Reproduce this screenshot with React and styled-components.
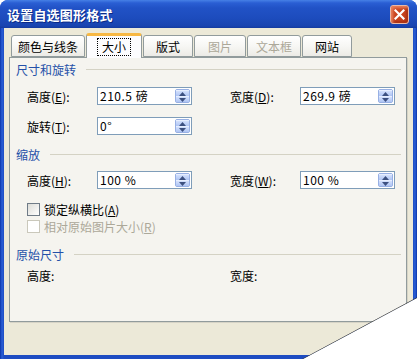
import styled, { createGlobalStyle } from "styled-components";

const GlobalStyle = createGlobalStyle`
  html, body {
    margin: 0;
    padding: 0;
    background: #ffffff;
    overflow: hidden;
  }
  body {
    font-family: "Noto Sans CJK SC", "Noto Sans", sans-serif;
    font-size: 12px;
    color: #000;
  }
`;

const Window = styled.div`
  position: relative;
  width: 417px;
  height: 359px;
  display: flex;
  flex-direction: column;
  background: linear-gradient(90deg, #0b34a8 0px, #2a5fd6 2px, #1d4cc2 4px, #1d4cc2 413px, #2a5fd6 415px, #0b34a8 417px);
  border-radius: 8px 8px 0 0;
  clip-path: polygon(0 0, 100% 0, 100% 298px, 303px 100%, 0 100%);
`;

const TitleBar = styled.div`
  height: 28px;
  flex: none;
  display: flex;
  align-items: center;
  justify-content: space-between;
  padding: 0 7px 0 7px;
  border-radius: 8px 8px 0 0;
  background: linear-gradient(
    180deg,
    #4680e6 0px,
    #2a5ed3 3px,
    #2152c6 8px,
    #1d4cbd 18px,
    #1944b0 26px,
    #143b9f 28px
  );
`;

const Title = styled.span`
  color: #ffffff;
  font-size: 13px;
  font-weight: bold;
  letter-spacing: 0.2px;
  text-shadow: 1px 1px 0 #0b2a86;
`;

const CloseButton = styled.div`
  position: relative;
  z-index: 5;
  flex: none;
  width: 19px;
  height: 19px;
  box-sizing: border-box;
  margin-right: 1px;
  border: 1px solid #e9b9a8;
  border-radius: 3px;
  background-color: #c8431f;
  box-shadow: inset 2px 2px 3px #e9805c, inset -2px -2px 3px #a52e12;
  display: flex;
  align-items: center;
  justify-content: center;
`;

const Frame = styled.div`
  flex: 1;
  display: flex;
  flex-direction: column;
  padding: 0 4px 4px 4px;
`;

const Client = styled.div`
  flex: 1;
  background: #ece9d8;
  padding: 5px 6px 0 5px;
`;

const TabRow = styled.div`
  display: flex;
  align-items: flex-end;
  height: 24px;
  padding-left: 2px;
  gap: 1px;
`;

const Tab = styled.div`
  position: relative;
  z-index: ${(p) => (p.$active ? 2 : 1)};
  width: ${(p) => p.$w}px;
  height: ${(p) => (p.$active ? 25 : 22)}px;
  margin-bottom: ${(p) => (p.$active ? -1 : 0)}px;
  box-sizing: border-box;
  display: flex;
  align-items: ${(p) => (p.$active ? "flex-start" : "center")};
  justify-content: center;
  padding-top: ${(p) => (p.$active ? 4 : 0)}px;
  font-size: 12px;
  color: ${(p) => (p.$disabled ? "#aca899" : "#000")};
  border: 1px solid #919b9c;
  border-bottom: ${(p) => (p.$active ? "none" : "1px solid #919b9c")};
  border-top: ${(p) => (p.$active ? "3px solid #f7b843" : "1px solid #919b9c")};
  border-radius: 3px 3px 0 0;
  background: ${(p) =>
    p.$active
      ? "#fcfcfe"
      : "linear-gradient(180deg, #ffffff 0%, #f7f7f4 50%, #ecebe6 100%)"};
`;

const FocusText = styled.span`
  outline: 1px dotted #000;
  outline-offset: 1px;
  padding: 0 3px;
  line-height: 14px;
`;

const Panel = styled.div`
  height: 265px;
  box-sizing: border-box;
  border: 1px solid #919b9c;
  background: #f5f4ef;
  padding: 3px 5px 0 6px;
  box-shadow: 1px 1px 0 #d6d3c6;
`;

const SectionHeader = styled.div`
  display: flex;
  align-items: center;
  gap: 10px;
  height: 14px;
  color: #2450a8;
  font-size: 12px;
  margin-top: ${(p) => p.$top || 0}px;

  &::after {
    content: "";
    flex: 1;
    height: 1px;
    background: #d4d2c4;
  }
`;

const Row = styled.div`
  display: flex;
  align-items: center;
  padding-left: 11px;
  height: ${(p) => p.$h || 18}px;
  margin-top: ${(p) => p.$top || 0}px;
`;

const Field = styled.div`
  flex: none;
  display: flex;
  align-items: center;
  width: ${(p) => p.$w || 203}px;
`;

const Label = styled.span`
  width: 70px;
  font-size: 12px;
  white-space: nowrap;

  u {
    text-decoration: underline;
    text-underline-offset: 1px;
  }
`;

const InputBox = styled.div`
  width: 95px;
  height: 18px;
  box-sizing: border-box;
  border: 1px solid #7f9db9;
  background: #ffffff;
  display: flex;
  align-items: stretch;
`;

const InputText = styled.span`
  flex: 1;
  padding-left: 2px;
  font-size: 12px;
  line-height: 16px;
  letter-spacing: 0.5px;
  white-space: pre;
`;

const Spinner = styled.div`
  width: 15px;
  margin: 1px 1px 1px 0;
  display: flex;
  flex-direction: column;
  box-sizing: border-box;
  border: 1px solid #98b0e4;
  border-radius: 2px;
  background: #b7cbf6;
`;

const SpinHalf = styled.div`
  flex: 1;
  box-sizing: border-box;
  border-top: 1px solid #e6eeff;
  background: linear-gradient(180deg, #d3e0fc 0%, #aec4f3 100%);
  display: flex;
  align-items: center;
  justify-content: center;
`;

const CheckRow = styled.div`
  display: flex;
  align-items: center;
  gap: 4px;
  padding-left: 11px;
  height: 14px;
  margin-top: ${(p) => p.$top || 0}px;
  color: ${(p) => (p.$disabled ? "#aca899" : "#000")};
`;

const CheckBox = styled.div`
  width: 13px;
  height: 13px;
  box-sizing: border-box;
  border: 1px solid ${(p) => (p.$disabled ? "#cac8bb" : "#6f7b87")};
  background: ${(p) =>
    p.$disabled ? "#ffffff" : "linear-gradient(135deg, #dcdcd7 0%, #ffffff 100%)"};
`;

const CurlLine = styled.svg`
  position: absolute;
  left: 0;
  top: 0;
  pointer-events: none;
`;

const Arrow = ({ up }) => (
  <svg width="7" height="4" viewBox="0 0 7 4">
    <path d={up ? "M0 4 L3.5 0 L7 4 Z" : "M0 0 L3.5 4 L7 0 Z"} fill="#3c5080" />
  </svg>
);

const SpinInput = ({ value }) => (
  <InputBox>
    <InputText>{value}</InputText>
    <Spinner>
      <SpinHalf>
        <Arrow up />
      </SpinHalf>
      <SpinHalf>
        <Arrow />
      </SpinHalf>
    </Spinner>
  </InputBox>
);

const tabs = [
  { label: "颜色与线条", w: 74 },
  { label: "大小", w: 56, active: true },
  { label: "版式", w: 50 },
  { label: "图片", w: 52, disabled: true },
  { label: "文本框", w: 54, disabled: true },
  { label: "网站", w: 50 },
];

export default function App() {
  return (
    <>
      <GlobalStyle />
      <Window>
        <TitleBar>
          <Title>设置自选图形格式</Title>
          <CloseButton>
            <svg width="11" height="11" viewBox="0 0 11 11">
              <path d="M1.5 1.5 L9.5 9.5 M9.5 1.5 L1.5 9.5" stroke="#ffffff" strokeWidth="2.2" strokeLinecap="square" />
            </svg>
          </CloseButton>
        </TitleBar>
        <Frame>
          <Client>
            <TabRow>
              {tabs.map((t) => (
                <Tab key={t.label} $w={t.w} $active={t.active} $disabled={t.disabled}>
                  {t.active ? <FocusText>{t.label}</FocusText> : t.label}
                </Tab>
              ))}
            </TabRow>
            <Panel>
              <SectionHeader $top={1}>尺寸和旋转</SectionHeader>
              <Row $top={11}>
                <Field>
                  <Label>高度(<u>E</u>):</Label>
                  <SpinInput value="210.5 磅" />
                </Field>
                <Field $w={165}>
                  <Label>宽度(<u>D</u>):</Label>
                  <SpinInput value="269.9 磅" />
                </Field>
              </Row>
              <Row $top={12}>
                <Field>
                  <Label>旋转(<u>T</u>):</Label>
                  <SpinInput value="0°" />
                </Field>
              </Row>
              <SectionHeader $top={12}>缩放</SectionHeader>
              <Row $top={10}>
                <Field>
                  <Label>高度(<u>H</u>):</Label>
                  <SpinInput value="100 %" />
                </Field>
                <Field $w={165}>
                  <Label>宽度(<u>W</u>):</Label>
                  <SpinInput value="100 %" />
                </Field>
              </Row>
              <CheckRow $top={13}>
                <CheckBox />
                <span>锁定纵横比(<u>A</u>)</span>
              </CheckRow>
              <CheckRow $top={3} $disabled>
                <CheckBox $disabled />
                <span>相对原始图片大小(<u>R</u>)</span>
              </CheckRow>
              <SectionHeader $top={14}>原始尺寸</SectionHeader>
              <Row $top={7} $h={14}>
                <Field>
                  <Label>高度:</Label>
                </Field>
                <Field $w={165}>
                  <Label>宽度:</Label>
                </Field>
              </Row>
            </Panel>
          </Client>
        </Frame>
        <CurlLine width="417" height="359" viewBox="0 0 417 359">
          <line x1="302" y1="359.5" x2="417.5" y2="297.5" stroke="#3c3c3c" strokeWidth="1" />
        </CurlLine>
      </Window>
    </>
  );
}
